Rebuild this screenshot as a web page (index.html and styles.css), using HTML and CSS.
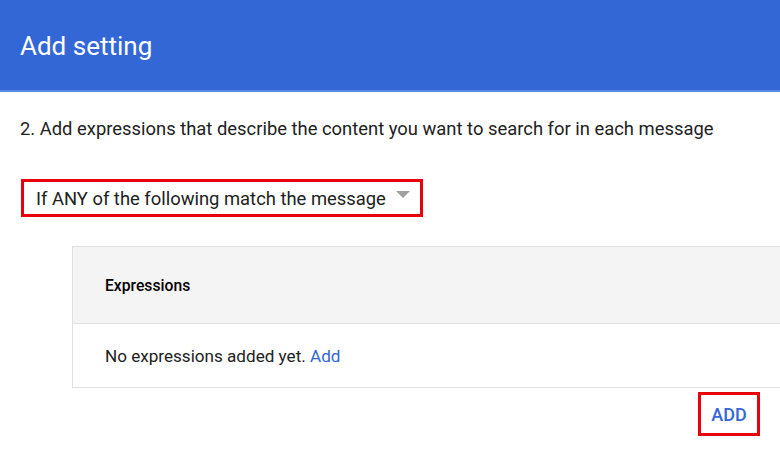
FILE: index.html
```html
<!DOCTYPE html>
<html lang="en">
<head>
  <meta charset="UTF-8" />
  <title>Add setting</title>
  <link rel="stylesheet" href="styles.css">
</head>
<body>
  <div class="header">
    <h1>Add setting</h1>
  </div>

  <div class="content">
    <p class="step">2. Add expressions that describe the content you want to search for in each message</p>

    <div class="match-select">
      <span>If ANY of the following match the message</span>
      <span class="arrow"></span>
    </div>

    <div class="expressions">
      <div class="expr-head">Expressions</div>
      <div class="expr-body">No expressions added yet. <a href="#">Add</a></div>
    </div>

    <div class="actions">
      <button class="add-btn">ADD</button>
    </div>
  </div>
</body>
</html>
```

FILE: styles.css
```css
:root {
  --main-color: #3367d6;
  --border: #e0e0e0;
}
body {
  font-family: Roboto, 'Liberation Sans', sans-serif;
  margin: 0;
  padding: 0;
  background: white;
  color: #212121;
  overflow: hidden;
}
.header {
  background-color: var(--main-color);
  height: 92px;
  border-bottom: 2px solid #5a8ae8;
  box-sizing: border-box;
  padding: 29px 20px 0;
}
.header h1 {
  margin: 0;
  color: white;
  font-size: 26px;
  font-weight: 400;
  line-height: 34px;
}
.content {
  padding: 0 0 0 20px;
}
.step {
  margin: 26px 0 0;
  font-size: 18.4px;
  line-height: 22px;
  color: #212121;
}
.match-select {
  display: inline-flex;
  align-items: center;
  margin: 39px 0 0 1px;
  height: 38px;
  box-sizing: border-box;
  border: 3px solid #e8000b;
  padding: 0 10px 0 12px;
  font-size: 18.4px;
  color: #212121;
}
.arrow {
  width: 0;
  height: 0;
  margin: -8px 0 0 10px;
  border-left: 7px solid transparent;
  border-right: 7px solid transparent;
  border-top: 7px solid #a0a0a0;
}
.expressions {
  margin: 29px 0 0 52px;
  border: 1px solid var(--border);
  border-right: none;
}
.expr-head {
  background: #f4f4f4;
  height: 76px;
  display: flex;
  align-items: center;
  padding-left: 32px;
  font-size: 15.7px;
  font-weight: 500;
  color: #000;
  border-bottom: 1px solid var(--border);
}
.expr-body {
  height: 63px;
  display: flex;
  align-items: center;
  padding-left: 32px;
  font-size: 17.1px;
  color: #212121;
  white-space: pre;
}
.expr-body a {
  color: var(--main-color);
  text-decoration: none;
}
.actions {
  display: flex;
  justify-content: flex-end;
  padding: 4px 20px 0 0;
}
.add-btn {
  width: 62px;
  height: 44px;
  border: 3px solid #e8000b;
  background: white;
  color: var(--main-color);
  font-family: Roboto, sans-serif;
  font-size: 18px;
  font-weight: 500;
  padding: 0;
  cursor: pointer;
}
```
